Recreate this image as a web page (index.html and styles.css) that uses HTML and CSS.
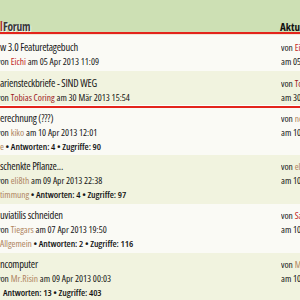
FILE: index.html
```html
<!DOCTYPE html>
<html lang="de">
<head>
<meta charset="utf-8">
<link rel="stylesheet" href="styles.css">
</head>
<body>
<div class="page">
  <div class="header">
    <div class="h-title"><span class="h-mark">l</span>Forum</div>
    <div class="h-right">Aktuell</div>
  </div>
  <div class="redline"></div>

  <div class="row light two">
    <div class="left">
      <div class="title">w 3.0 Featuretagebuch</div>
      <div class="meta">von <a class="red">Eichi</a> am 05 Apr 2013 11:09</div>
    </div>
    <div class="right">
      <div class="r1">von <a class="red">Eichi</a></div>
      <div class="r2">am 05 Apr 2013</div>
    </div>
  </div>
  <div class="row green two last">
    <div class="left">
      <div class="title">ariensteckbriefe - SIND WEG</div>
      <div class="meta">von <a class="dred">Tobias Coring</a> am 30 Mär 2013 15:54</div>
    </div>
    <div class="right">
      <div class="r1">von <a class="dred">Tobias</a></div>
      <div class="r2">am 30 Mär 2013</div>
    </div>
  </div>
  <div class="redline2"></div>

  <div class="row light first">
    <div class="left">
      <div class="title">erechnung (???)</div>
      <div class="meta">von <a class="tan">kiko</a> am 10 Apr 2013 12:01</div>
      <div class="info"><a class="tan">e</a> • Antworten: 4 • Zugriffe: 90</div>
    </div>
    <div class="right">
      <div class="r1">von <a class="tan">noname</a></div>
      <div class="r2">am 10 Apr 2013</div>
    </div>
  </div>
  <div class="row green">
    <div class="left">
      <div class="title">schenkte Pflanze...</div>
      <div class="meta">von <a class="tan">eli8th</a> am 09 Apr 2013 22:38</div>
      <div class="info"><a class="tan">timmung</a> • Antworten: 4 • Zugriffe: 97</div>
    </div>
    <div class="right">
      <div class="r1">von <a class="tan">eli8th</a></div>
      <div class="r2">am 10 Apr 2013</div>
    </div>
  </div>
  <div class="row light">
    <div class="left">
      <div class="title">uviatilis schneiden</div>
      <div class="meta">von <a class="tan">Tiegars</a> am 07 Apr 2013 19:50</div>
      <div class="info"><a class="tan">Allgemein</a> • Antworten: 2 • Zugriffe: 116</div>
    </div>
    <div class="right">
      <div class="r1">von <a class="red">Sascha</a></div>
      <div class="r2">am 10 Apr 2013</div>
    </div>
  </div>
  <div class="row green">
    <div class="left">
      <div class="title">ncomputer</div>
      <div class="meta">von <a class="tan">Mr.Risin</a> am 09 Apr 2013 00:03</div>
      <div class="info cut">Antworten: 13 • Zugriffe: 403</div>
    </div>
    <div class="right">
      <div class="r1">von <a class="tan">Mr.Risin</a></div>
      <div class="r2">am 10 Apr 2013</div>
    </div>
  </div>
</div>
</body>
</html>
```

FILE: styles.css
```css
html, body {
  margin: 0;
  padding: 0;
  background: #fafaf5;
}
.page {
  width: 300px;
  height: 300px;
  overflow: hidden;
  font-family: "Open Sans", "Liberation Sans", sans-serif;
  font-stretch: 87.5%;
  color: #1e1e1e;
}
.header {
  height: 32px;
  background: #cde0b4;
  display: grid;
  grid-template-columns: 280px 1fr;
  align-items: end;
  white-space: nowrap;
  overflow: hidden;
}
.h-title {
  font-size: 11.5px;
  font-weight: 700;
  color: #3c3c3c;
  text-shadow: 1px 1px 0 #f4f8ee;
  line-height: 11px;
  letter-spacing: -0.3px;
}
.h-mark {
  color: #b4322a;
  margin-right: 0.5px;
}
.h-right {
  font-size: 11px;
  font-weight: 700;
  color: #111;
  line-height: 11px;
  letter-spacing: 0;
}
.redline {
  height: 2px;
  background: #e3241b;
  border-bottom: 1px solid #f3e3d6;
}
.redline2 {
  height: 2px;
  background: #e3241b;
  border-top: 1px solid #ffffff;
}
.row {
  display: grid;
  grid-template-columns: 281px 1fr;
  white-space: nowrap;
  overflow: hidden;
  padding: 4px 0 3px 0;
  height: 42px;
}
.row.two {
  padding: 5px 0 2px 0;
  height: 29px;
}
.row.two.last {
  padding-bottom: 0;
}
.row.first {
  padding: 3px 0 2px 0;
}
.light { background: #fafaf5; }
.green { background: #f1f3df; }
.left, .right { overflow: hidden; }
.title {
  font-size: 10.5px;
  font-weight: 500;
  line-height: 15px;
  color: #161616;
  letter-spacing: -0.2px;
}
.meta, .info, .r1, .r2 {
  font-size: 9.5px;
  line-height: 14px;
  letter-spacing: 0;
  color: #151515;
}
.info {
  font-weight: 600;
  line-height: 13px;
  letter-spacing: -0.05px;
}
.r1 { line-height: 15px; }
.meta { text-indent: -3px; }
.info.cut { padding-left: 3px; }
a { text-decoration: none; font-weight: 400; }
.red { color: #c2281f; }
.dred { color: #9e1a24; }
.tan { color: #b0855f; }
```
